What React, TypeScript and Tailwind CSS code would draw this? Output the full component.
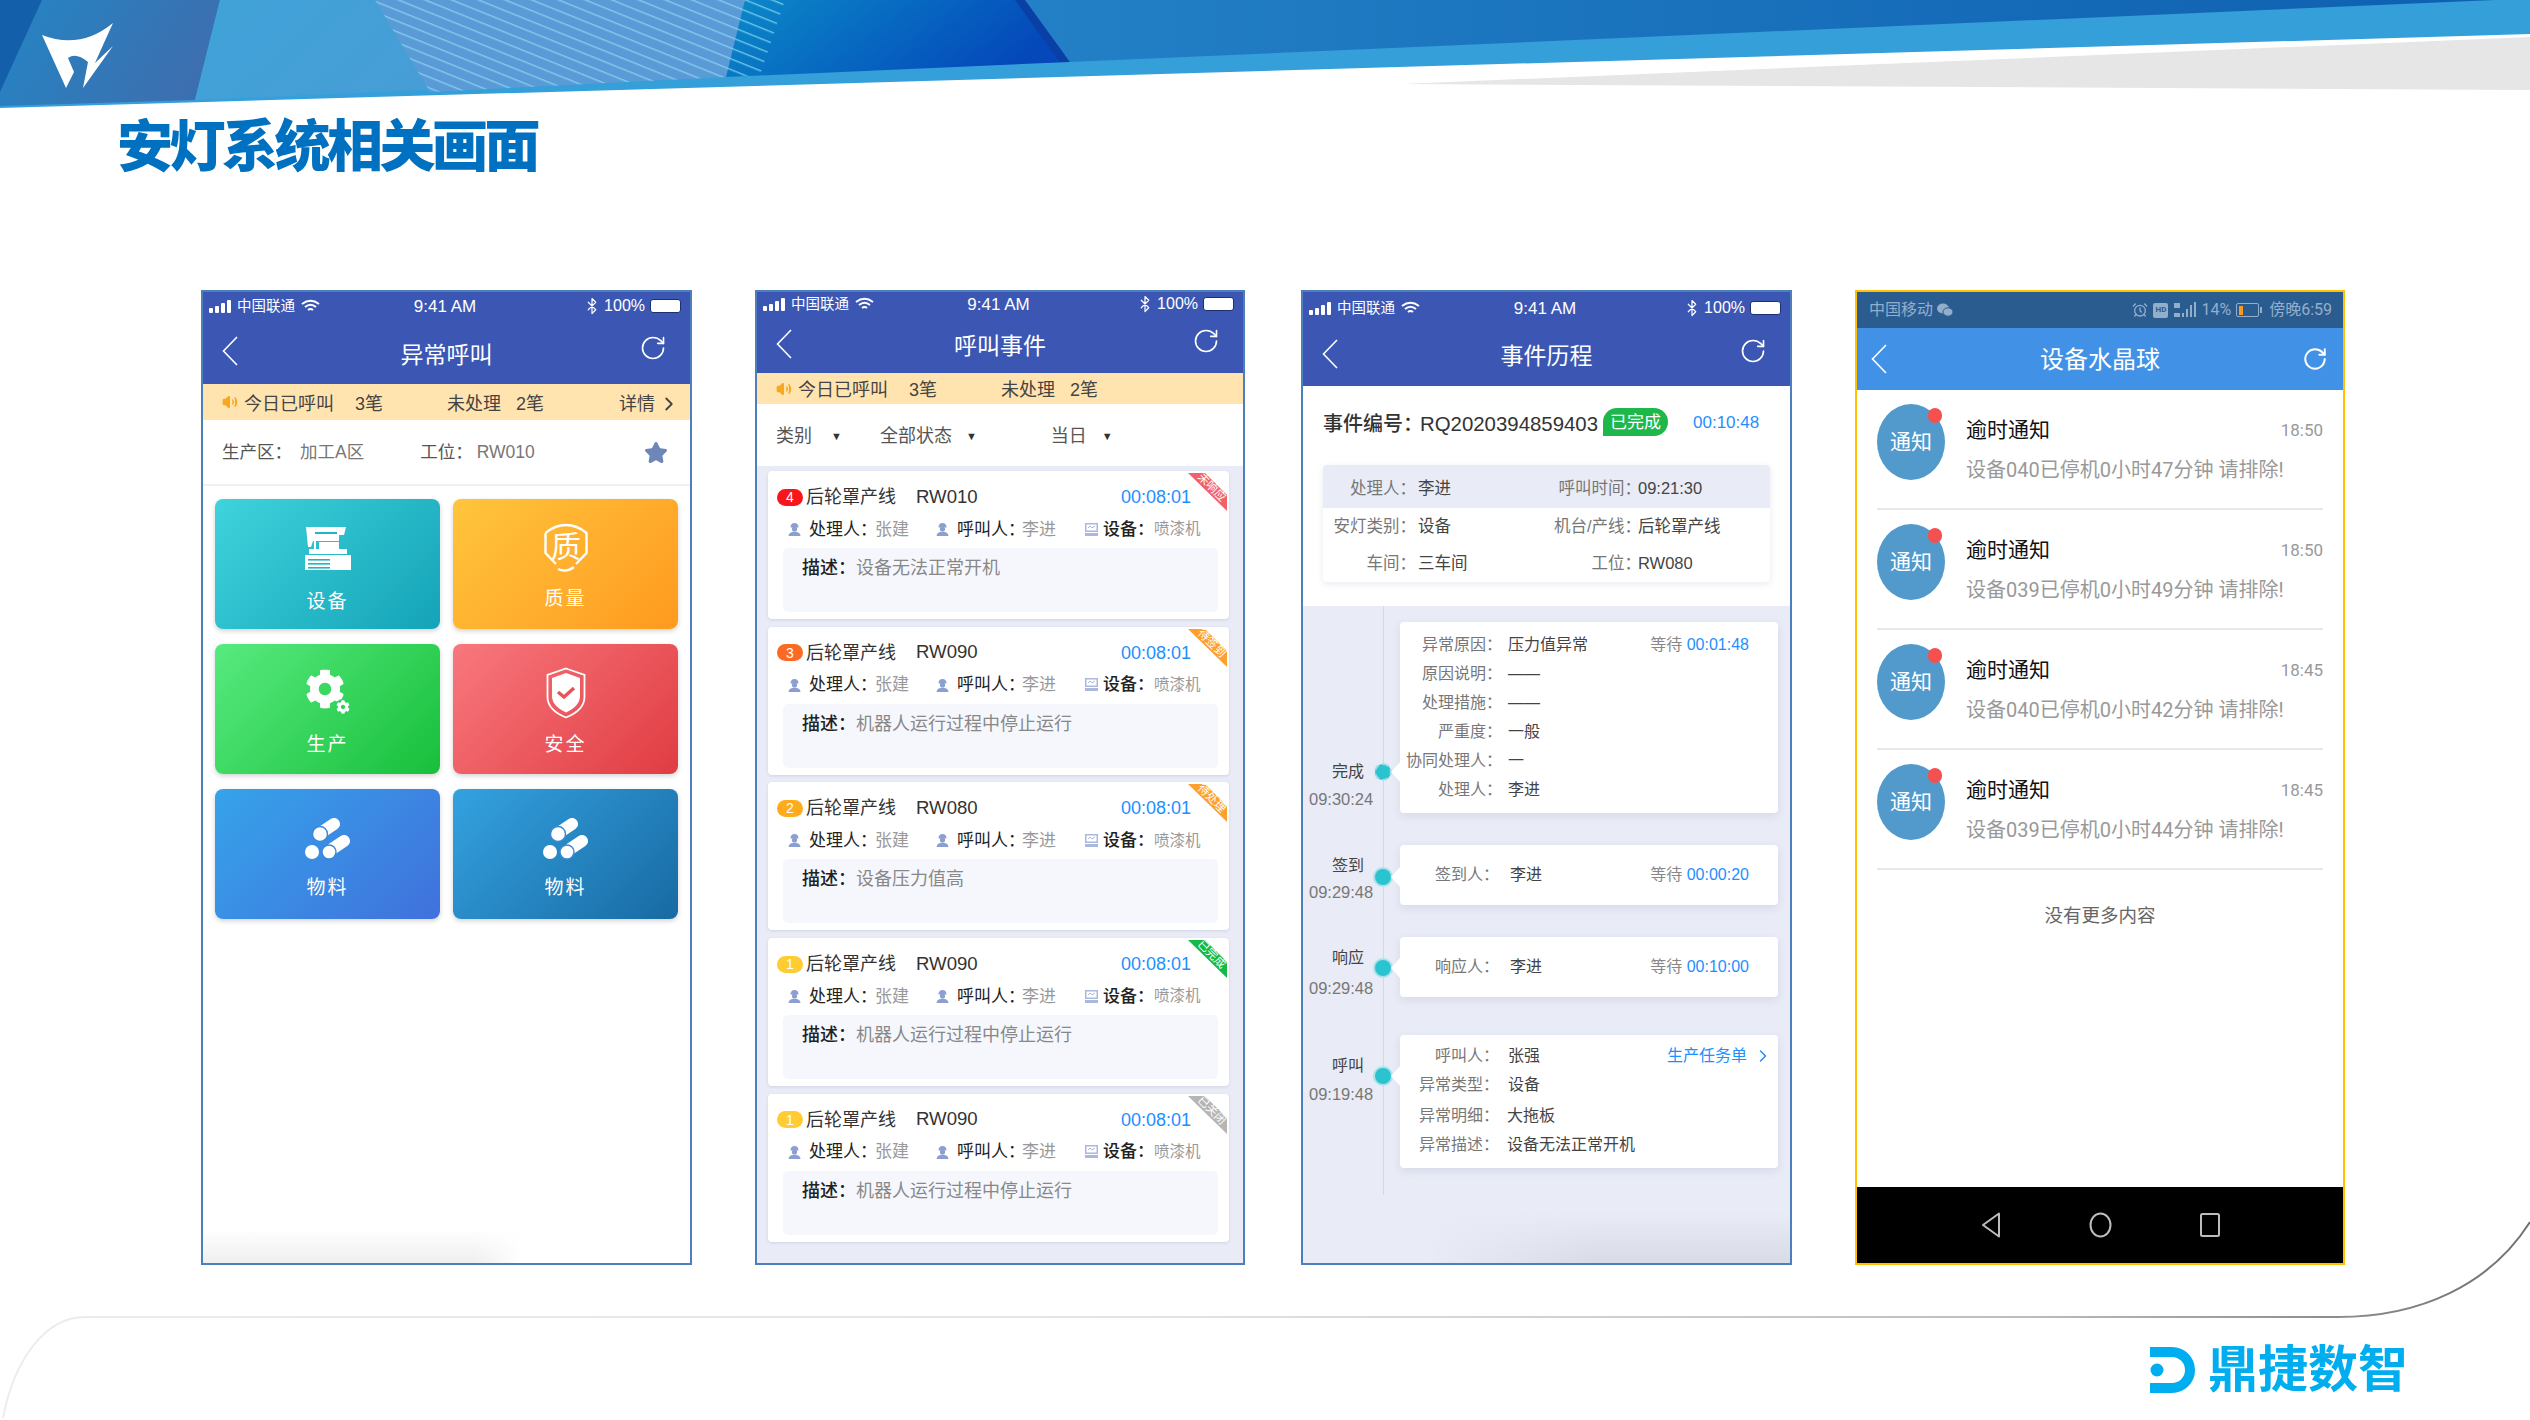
import { AlarmClock, Bluetooth, ChevronRight, RotateCw, Star, Volume2 } from "lucide-react";
import { FaCog } from "react-icons/fa";

const Back = ({ c = "" }: { c?: string }) => (
  <svg className={c} width="16" height="30" viewBox="0 0 16 30" fill="none" stroke="white" strokeWidth="1.6">
    <path d="M15 1 L1.5 15 L15 29" />
  </svg>
);

function Banner() {
  return (
    <svg className="absolute left-0 top-0" width="2530" height="110" viewBox="0 0 2530 110">
      <defs>
        <linearGradient id="a" x1="0" x2="1" y1="0" y2="0.3">
          <stop offset="0" stopColor="#2485c4" />
          <stop offset="1" stopColor="#3c6fb0" />
        </linearGradient>
        <linearGradient id="b" x1="0" x2="1" y1="0" y2="0.2">
          <stop offset="0" stopColor="#3fa2d8" />
          <stop offset="1" stopColor="#4d9ad4" />
        </linearGradient>
        <linearGradient id="c" x1="0" x2="1" y1="0" y2="0.3">
          <stop offset="0" stopColor="#0b8ac8" />
          <stop offset="1" stopColor="#0448ba" />
        </linearGradient>
        <linearGradient id="d" x1="0" x2="1" y1="0" y2="0">
          <stop offset="0" stopColor="#2380c6" />
          <stop offset="1" stopColor="#0e60b0" />
        </linearGradient>
        <pattern id="h" width="10" height="10" patternUnits="userSpaceOnUse" patternTransform="rotate(22)">
          <rect width="10" height="1.4" fill="#8fdcf2" fillOpacity="0.75" />
        </pattern>
      </defs>
      <polygon points="0,0 2530,0 2530,34 0,108" fill="#349fd9" />
      <polygon points="0,0 45,0 0,95" fill="#145fa9" />
      <polygon points="42,0 220,0 195,100 0,106 0,92" fill="url(#a)" />
      <polygon points="220,0 748,0 726,77 195,100" fill="url(#b)" />
      <polygon points="375,0 745,0 726,77 430,92" fill="#5a9ad6" />
      <polygon points="745,0 1025,0 1070,62 726,77" fill="url(#c)" />
      <polygon points="1015,0 1028,0 1070,62 1060,62" fill="#0a3fa6" />
      <polygon points="1025,0 2495,0 1070,62" fill="url(#d)" />
      <polygon points="375,0 785,0 760,75 726,77 430,92" fill="url(#h)" />
      <polygon points="1402,84 2530,37 2530,90" fill="#e6e6e6" />
      <path
        d="M42 35 Q80 50 113 23 Q103 45 95 63 L113 46 L83 88 L88 62 Q76 52 68 58 L74 72 L66 88 Z"
        fill="white"
      />
    </svg>
  );
}

function FooterCurve() {
  return (
    <svg className="absolute left-0 top-[1200px]" width="2530" height="220" viewBox="0 0 2530 220" fill="none">
      <defs>
        <linearGradient id="f" gradientUnits="userSpaceOnUse" x1="0" x2="2530" y1="0" y2="0">
          <stop offset="0" stopColor="#ececec" />
          <stop offset="0.45" stopColor="#e4e4e4" />
          <stop offset="0.8" stopColor="#bdbdbd" />
          <stop offset="1" stopColor="#6f6f6f" />
        </linearGradient>
      </defs>
      <path d="M3 218 C14 160 45 117 85 117 L2338 117 C2420 117 2490 85 2530 22" stroke="url(#f)" strokeWidth="2" />
    </svg>
  );
}

function IosStatus({ h }: { h: string }) {
  return (
    <div className={`flex items-center justify-between pl-[6px] pr-[9px] pt-[2px] text-white ${h}`}>
      <div className="flex w-[170px] items-center">
        <svg width="23" height="13" viewBox="0 0 23 13" fill="white">
          <rect x="0" y="8" width="4" height="5" rx="1" />
          <rect x="6" y="6" width="4" height="7" rx="1" />
          <rect x="12" y="3" width="4" height="10" rx="1" />
          <rect x="18" y="0" width="4" height="13" rx="1" />
        </svg>
        <span className="ml-[5px] text-[14.5px] leading-none">中国联通</span>
        <svg className="ml-[6px]" width="19" height="14" viewBox="0 0 19 14" fill="none" stroke="white" strokeWidth="2">
          <path d="M1 5 Q9.5 -1.5 18 5" />
          <path d="M4 8 Q9.5 3.5 15 8" />
          <path d="M7 11 Q9.5 9 12 11" />
        </svg>
      </div>
      <span className="text-[17px] font-medium leading-none">9:41 AM</span>
      <div className="flex w-[170px] items-center justify-end">
        <Bluetooth size={18} strokeWidth={1.6} />
        <span className="ml-[3px] text-[16px] leading-none">100%</span>
        <div className="ml-[5px] flex h-[14px] w-[31px] items-center rounded-[3px] border border-[#1c2f70] bg-white" />
      </div>
    </div>
  );
}

function Nav({ title, h, pt }: { title: string; h: string; pt: string }) {
  return (
    <div className={`flex items-center justify-between text-white ${h}`}>
      <div className="flex w-[80px] pl-[19px]">
        <Back />
      </div>
      <div className={`flex-1 text-center text-[23px] leading-none ${pt}`}>{title}</div>
      <div className="flex w-[80px] justify-end pr-[23px]">
        <RotateCw size={28} strokeWidth={1.4} className="-mt-[6px]" />
      </div>
    </div>
  );
}

function YellowBar({ h, detail }: { h: string; detail?: boolean }) {
  return (
    <div className={`flex items-center bg-[#ffe4b0] pl-[19px] pr-[10px] text-[18px] leading-none text-[#444] ${h}`}>
      <Volume2 size={16} className="fill-[#f7a823] text-[#f7a823]" />
      <span className="ml-[6px] pt-[3px]">今日已呼叫</span>
      <span className="ml-[21px] pt-[3px]">3笔</span>
      <span className="ml-[64px] pt-[3px]">未处理</span>
      <span className="ml-[15px] pt-[3px]">2笔</span>
      {detail && (
        <span className="ml-auto flex items-center pt-[3px]">
          详情
          <ChevronRight size={22} strokeWidth={2} className="ml-[3px]" />
        </span>
      )}
    </div>
  );
}

const Machine = () => (
  <svg width="46" height="43" viewBox="0 0 46 43" fill="white">
    <path d="M1 0 H41 L39 8 H34 V14 H8 L6 20 H3 Z" />
    <rect x="10" y="5" width="22" height="2" fill="#22b5c8" />
    <rect x="9" y="12" width="2" height="10" />
    <rect x="14" y="15" width="20" height="7" />
    <rect x="4" y="22" width="38" height="5" />
    <rect x="0" y="28" width="46" height="15" />
    <rect x="3" y="32" width="22" height="1.6" fill="#22b5c8" />
    <rect x="3" y="36" width="22" height="1.6" fill="#22b5c8" />
    <rect x="3" y="40" width="22" height="1.6" fill="#22b5c8" />
  </svg>
);

const Quality = () => (
  <svg width="44" height="50" viewBox="0 0 44 50" fill="none" stroke="white" strokeWidth="2.4">
    <path d="M1.5 10 Q11 2 22 2 Q33 2 42.5 10 V30 L32 41 M12 41 L1.5 30 V10 M14 46 Q22 50 30 44" />
    <text x="22" y="34" textAnchor="middle" fontSize="30" fill="white" stroke="none">
      质
    </text>
  </svg>
);

const Gear = () => (
  <div className="relative h-[48px] w-[46px]">
    <FaCog size={40} color="white" />
    <div className="absolute bottom-[2px] right-0 flex h-[16px] w-[16px] items-center justify-center rounded-full bg-[#2fd25c]">
      <FaCog size={14} color="white" />
    </div>
  </div>
);

const Safety = () => (
  <svg width="40" height="52" viewBox="0 0 40 52" fill="none">
    <path d="M20 1.5 L38.5 8 V30 Q38.5 43 20 50.5 Q1.5 43 1.5 30 V8 Z" stroke="white" strokeWidth="1.8" />
    <path d="M20 6 L34 11 V29 Q34 39 20 45.5 Q6 39 6 29 V11 Z" fill="white" />
    <path d="M12 25 L18 30 L28 21" stroke="#e9535a" strokeWidth="3.4" />
  </svg>
);

const Material = () => (
  <svg width="46" height="44" viewBox="0 0 46 44" fill="white">
    <g stroke="white" strokeWidth="12" strokeLinecap="round">
      <path d="M17 16 L29 8" />
      <path d="M27 33 L39 25" />
    </g>
    <circle cx="7" cy="36" r="7" />
    <circle cx="15" cy="18" r="7.5" stroke="#3a88d8" strokeWidth="1.4" />
    <circle cx="24" cy="36" r="7" stroke="#3a88d8" strokeWidth="1.4" />
  </svg>
);

const tiles = [
  { l: "设备", g: "bg-[linear-gradient(135deg,#3fd3dc,#14a3b8)]", i: <Machine />, m: "mt-[18px]" },
  { l: "质量", g: "bg-[linear-gradient(135deg,#ffc53d,#ff9a1f)]", i: <Quality />, m: "mt-[15px]" },
  { l: "生产", g: "bg-[linear-gradient(135deg,#58ea7f,#17bf3b)]", i: <Gear />, m: "mt-[16px]" },
  { l: "安全", g: "bg-[linear-gradient(135deg,#f8787d,#e03c42)]", i: <Safety />, m: "mt-[16px]" },
  { l: "物料", g: "bg-[linear-gradient(135deg,#36a3ea,#4071dc)]", i: <Material />, m: "mt-[14px]" },
  { l: "物料", g: "bg-[linear-gradient(135deg,#34a2e0,#186aa3)]", i: <Material />, m: "mt-[14px]" },
];

function PhoneOne() {
  return (
    <div className="relative flex h-[975px] w-[491px] shrink-0 flex-col overflow-hidden border-2 border-[#4d7fbc] bg-white">
      <div className="bg-[#3b57b3]">
        <IosStatus h="h-[26px]" />
        <Nav title="异常呼叫" h="h-[66px]" pt="pt-[8px]" />
      </div>
      <YellowBar h="h-[36px]" detail />
      <div className="flex h-[66px] items-center border-b-2 border-[#f0f0f0] pl-[19px] pr-[22px] pt-[2px] text-[17.5px] leading-none text-[#555]">
        <span>生产区：</span>
        <span className="ml-[8px] text-[#777]">加工A区</span>
        <span className="ml-[56px]">工位：</span>
        <span className="ml-[4px] text-[#777]">RW010</span>
        <Star size={24} className="ml-auto fill-[#6f86ba] text-[#6f86ba]" />
      </div>
      <div className="grid grid-cols-[225px_225px] gap-x-[13px] gap-y-[15px] pl-[12px] pt-[13px]">
        {tiles.map((t, i) => (
          <div
            key={i}
            className={`flex h-[130px] flex-col items-center rounded-[8px] pt-[24px] text-white shadow-[0_2px_5px_rgba(0,0,0,0.18)] ${t.g}`}
          >
            <div className="flex h-[50px] items-center">{t.i}</div>
            <div className={`text-[19px] leading-[22px] tracking-[2px] ${t.m}`}>{t.l}</div>
          </div>
        ))}
      </div>
      <div className="absolute bottom-0 left-0 h-[34px] w-[320px] bg-[linear-gradient(to_top,#efefef,transparent)] [mask-image:linear-gradient(to_right,black_85%,transparent)]" />
    </div>
  );
}

const Worker = () => (
  <svg width="13" height="14" viewBox="0 0 13 14" fill="#8b9fd0">
    <path d="M2.5 5.5 Q2.5 1 6.5 1 Q10.5 1 10.5 5.5 Z" />
    <circle cx="6.5" cy="7" r="2.6" />
    <path d="M0.5 14 Q1 9.8 6.5 9.8 Q12 9.8 12.5 14 Z" />
  </svg>
);

const Device = () => (
  <svg width="13" height="13" viewBox="0 0 13 13" fill="#a9b8dc">
    <path d="M0 0 H13 V9 H0 Z M1.5 1.5 V7.5 H11.5 V1.5 Z" fillRule="evenodd" />
    <rect y="10" width="13" height="3" />
    <path d="M3 5 L5 3 L7 5 L10 3" stroke="#a9b8dc" fill="none" />
  </svg>
);

const events = [
  { n: "4", b: "bg-[#f7161b]", rw: "RW010", r: "#f0616c", t: "未响应", d: "设备无法正常开机" },
  { n: "3", b: "bg-[#fb6a23]", rw: "RW090", r: "#ff9f2d", t: "待签到", d: "机器人运行过程中停止运行" },
  { n: "2", b: "bg-[#ffab1c]", rw: "RW080", r: "#ff9f2d", t: "待处理", d: "设备压力值高" },
  { n: "1", b: "bg-[#ffcc33]", rw: "RW090", r: "#12ba46", t: "已完成", d: "机器人运行过程中停止运行" },
  { n: "1", b: "bg-[#ffcc33]", rw: "RW090", r: "#b5b5b5", t: "已关闭", d: "机器人运行过程中停止运行" },
];

function Ribbon({ color, text }: { color: string; text: string }) {
  return (
    <div className="absolute right-[2px] top-[2px] h-[38px] w-[39px]">
      <svg width="39" height="38" viewBox="0 0 39 38" className="absolute left-0 top-0">
        <polygon points="0,0 17,0 39,22 39,38" fill={color} />
      </svg>
      <span className="absolute left-[6px] top-[7px] w-[36px] rotate-45 text-center text-[11.5px] leading-[14px] text-white">
        {text}
      </span>
    </div>
  );
}

function EventCard({ e }: { e: (typeof events)[number] }) {
  return (
    <div className="relative h-[148px] rounded-[4px] bg-white pt-[16px] shadow-[0_1px_3px_rgba(60,70,120,0.15)]">
      <Ribbon color={e.r} text={e.t} />
      <div className="flex h-[20px] items-center pl-[9px] pr-[38px] text-[18px] leading-none text-[#333]">
        <span className={`flex h-[17px] w-[26px] items-center justify-center rounded-full text-[14px] text-white ${e.b}`}>
          {e.n}
        </span>
        <span className="ml-[3px]">后轮罩产线</span>
        <span className="ml-[20px] text-[18.6px]">{e.rw}</span>
        <span className="ml-auto text-[#1e8fff]">00:08:01</span>
      </div>
      <div className="mt-[12px] flex h-[20px] items-center pl-[20px] text-[17px] leading-none">
        <div className="flex w-[148px] items-center">
          <Worker />
          <span className="ml-[8px] text-[#222]">处理人：</span>
          <span className="-ml-[2px] text-[#999]">张建</span>
        </div>
        <div className="flex w-[149px] items-center">
          <Worker />
          <span className="ml-[8px] text-[#222]">呼叫人：</span>
          <span className="-ml-[3px] text-[#999]">李进</span>
        </div>
        <div className="flex items-center">
          <Device />
          <span className="ml-[5px] font-medium text-[#222]">设备：</span>
          <span className="text-[15.5px] text-[#999]">喷漆机</span>
        </div>
      </div>
      <div className="ml-[15px] mr-[11px] mt-[9px] h-[64px] rounded-[5px] bg-[#f5f7fd] pl-[19px] pt-[9px] text-[18px] leading-[22px]">
        <span className="font-medium text-[#222]">描述：</span>
        <span className="text-[#888]">{e.d}</span>
      </div>
    </div>
  );
}

function PhoneTwo() {
  return (
    <div className="ml-[63px] flex h-[975px] w-[490px] shrink-0 flex-col overflow-hidden border-2 border-[#4d7fbc] bg-[#e9ecf6]">
      <div className="bg-[#3b57b3]">
        <IosStatus h="h-[22px]" />
        <Nav title="呼叫事件" h="h-[59px]" pt="pt-[5px]" />
      </div>
      <YellowBar h="h-[31px]" />
      <div className="flex h-[62px] items-center bg-white pl-[19px] pt-[2px] text-[18px] leading-none text-[#555]">
        <span>类别</span>
        <span className="ml-[19px] text-[11px] text-[#333]">▼</span>
        <span className="ml-[38px]">全部状态</span>
        <span className="ml-[14px] text-[11px] text-[#333]">▼</span>
        <span className="ml-[74px]">当日</span>
        <span className="ml-[15px] text-[11px] text-[#333]">▼</span>
      </div>
      <div className="flex flex-col gap-[7.7px] pl-[11px] pr-[14px] pt-[5px]">
        {events.map((e, i) => (
          <EventCard key={i} e={e} />
        ))}
      </div>
    </div>
  );
}

function InfoRow({ a, b, c, d, bg }: { a: string; b: string; c: string; d: string; bg?: boolean }) {
  return (
    <div className={`flex items-center text-[16.5px] leading-none ${bg ? "h-[43px] bg-[#e9ecf6] pt-[4px]" : "h-[37px]"}`}>
      <span className="w-[93px] text-right text-[#777]">{a}</span>
      <span className="w-[125px] pl-[2px] text-[#444]">{b}</span>
      <span className="w-[100px] whitespace-nowrap text-right text-[#777]">{c}</span>
      <span className="-ml-[3px] text-[#444]">{d}</span>
    </div>
  );
}

const Notch = ({ c }: { c: string }) => (
  <div className={`absolute -left-[9px] h-0 w-0 border-y-[11px] border-r-[10px] border-y-transparent border-r-white ${c}`} />
);

function Wait({ t }: { t: string }) {
  return (
    <span className="ml-auto pr-[29px] leading-none text-[#888]">
      等待 <span className="text-[#1e8fff]">{t}</span>
    </span>
  );
}

function Kv({ k, v, w, pl = "pl-[6px]", extra }: { k: string; v: string; w: string; pl?: string; extra?: React.ReactNode }) {
  return (
    <div className="flex h-[29px] w-full items-center text-[16px] leading-none">
      <span className={`whitespace-nowrap text-right text-[#777] ${w}`}>{k}</span>
      <span className={`text-[#444] ${pl}`}>{v}</span>
      {extra}
    </div>
  );
}

function Col({ l, t, pt, mt, dot, dashed }: { l: string; t: string; pt: string; mt: string; dot: string; dashed?: boolean }) {
  return (
    <div className={`relative w-[97px] shrink-0 ${pt}`}>
      <div className="ml-[29px] h-[22px] text-[16px] leading-[22px] text-[#444]">{l}</div>
      <div className={`ml-[6px] h-[22px] text-[16.5px] leading-[22px] text-[#777] ${mt}`}>{t}</div>
      <div
        className={`absolute left-[72px] h-[16px] w-[16px] rounded-full bg-[#2cc3d1] ${dot} ${
          dashed ? "outline-2 outline-dashed outline-[#9fdfe6] -outline-offset-1" : "ring-2 ring-[#a8e3ea]"
        }`}
      />
    </div>
  );
}

function PhoneThree() {
  const card = "relative w-[378px] rounded-[4px] bg-white shadow-[0_3px_8px_rgba(70,80,140,0.12)]";
  return (
    <div className="relative ml-[56px] flex h-[975px] w-[491px] shrink-0 flex-col overflow-hidden border-2 border-[#4d7fbc] bg-white">
      <div className="bg-[#3b57b3]">
        <IosStatus h="h-[30px]" />
        <Nav title="事件历程" h="h-[64px]" pt="pt-[4px]" />
      </div>
      <div className="h-[220px] px-[20px] pt-[22px]">
        <div className="flex h-[28px] items-center leading-none text-[#333]">
          <span className="pt-[4px] text-[20px] font-medium">事件编号：</span>
          <span className="-ml-[3px] pt-[4px] text-[20.4px]">RQ2020394859403</span>
          <span className="ml-[5px] flex h-[28px] w-[65px] items-center justify-center rounded-[14px] rounded-bl-none bg-[#1eb84a] text-[17px] text-white">
            已完成
          </span>
          <span className="ml-[25px] text-[17px] text-[#1e8fff]">00:10:48</span>
        </div>
        <div className="mt-[29px] w-[447px] overflow-hidden rounded-[4px] bg-white shadow-[0_2px_6px_rgba(70,80,140,0.12)]">
          <InfoRow a="处理人：" b="李进" c="呼叫时间：" d="09:21:30" bg />
          <InfoRow a="安灯类别：" b="设备" c="机台/产线：" d="后轮罩产线" />
          <InfoRow a="车间：" b="三车间" c="工位：" d="RW080" />
        </div>
      </div>
      <div className="relative flex-1 bg-[#e9ecf6] pt-[16px]">
        <div className="absolute left-[80px] top-0 h-[589px] w-px bg-[#d3d7e6]" />
        <div className="flex">
          <Col l="完成" t="09:30:24" pt="pt-[139px]" mt="mt-[5px]" dot="top-[142px]" dashed />
          <div className={`${card} h-[191px] pt-[8px]`}>
            <Notch c="top-[139px]" />
            <Kv k="异常原因：" v="压力值异常" w="w-[102px]" extra={<Wait t="00:01:48" />} />
            <Kv k="原因说明：" v="——" w="w-[102px]" />
            <Kv k="处理措施：" v="——" w="w-[102px]" />
            <Kv k="严重度：" v="一般" w="w-[102px]" />
            <Kv k="协同处理人：" v="一" w="w-[102px]" />
            <Kv k="处理人：" v="李进" w="w-[102px]" />
          </div>
        </div>
        <div className="mt-[32px] flex">
          <Col l="签到" t="09:29:48" pt="pt-[10px]" mt="mt-[4px]" dot="top-[24px]" />
          <div className={`${card} flex h-[60px] items-center`}>
            <Notch c="top-[21px]" />
            <Kv k="签到人：" v="李进" w="w-[99px]" pl="pl-[11px]" extra={<Wait t="00:00:20" />} />
          </div>
        </div>
        <div className="mt-[32px] flex">
          <Col l="响应" t="09:29:48" pt="pt-[10px]" mt="mt-[8px]" dot="top-[23px]" />
          <div className={`${card} flex h-[60px] items-center`}>
            <Notch c="top-[20px]" />
            <Kv k="响应人：" v="李进" w="w-[99px]" pl="pl-[11px]" extra={<Wait t="00:10:00" />} />
          </div>
        </div>
        <div className="mt-[36px] flex">
          <Col l="呼叫" t="09:19:48" pt="pt-[20px]" mt="mt-[6px]" dot="top-[33px]" />
          <div className={`${card} h-[133px] pt-[6px]`}>
            <Notch c="top-[30px]" />
            <Kv
              k="呼叫人："
              v="张强"
              w="w-[99px]"
              pl="pl-[9px]"
              extra={
                <span className="ml-auto flex items-center pr-[5px] text-[#1e8fff]">
                  生产任务单
                  <ChevronRight size={20} strokeWidth={1.8} className="ml-[6px]" />
                </span>
              }
            />
            <Kv k="异常类型：" v="设备" w="w-[99px]" pl="pl-[9px]" />
            <div className="mt-[2px]">
              <Kv k="异常明细：" v="大拖板" w="w-[99px]" pl="pl-[8px]" />
            </div>
            <Kv k="异常描述：" v="设备无法正常开机" w="w-[99px]" pl="pl-[8px]" />
          </div>
        </div>
      </div>
      <div className="absolute bottom-0 right-0 h-[50px] w-[360px] bg-[linear-gradient(to_top,#d8dbe6,transparent)] [mask-image:linear-gradient(to_left,black_55%,transparent)]" />
    </div>
  );
}

const notices = [
  { t: "18:50", d: "设备040已停机0小时47分钟 请排除!" },
  { t: "18:50", d: "设备039已停机0小时49分钟 请排除!" },
  { t: "18:45", d: "设备040已停机0小时42分钟 请排除!" },
  { t: "18:45", d: "设备039已停机0小时44分钟 请排除!" },
];

function PhoneFour() {
  return (
    <div className="ml-[63px] flex h-[975px] w-[490px] shrink-0 flex-col overflow-hidden border-2 border-[#ffc000] bg-white font-['Roboto','Noto_Sans_CJK_SC',sans-serif]">
      <div className="flex h-[36px] items-center bg-[#2b5c90] pl-[12px] pr-[11px] text-[16px] leading-none text-[#93aecb]">
        <span>中国移动</span>
        <svg className="ml-[4px]" width="16" height="14" viewBox="0 0 16 14" fill="#93aecb">
          <ellipse cx="6" cy="5.5" rx="6" ry="5" />
          <ellipse cx="11" cy="9" rx="5" ry="4.2" stroke="#2b5c90" />
        </svg>
        <AlarmClock size={16} className="ml-auto" strokeWidth={2} />
        <span className="ml-[5px] flex h-[15px] w-[15px] items-center justify-center rounded-[2px] bg-[#93aecb] text-[8px] font-bold text-[#2b5c90]">
          HD
        </span>
        <svg className="ml-[6px]" width="24" height="16" viewBox="0 0 24 16" fill="#93aecb">
          <rect x="0" y="1" width="6" height="5" />
          <rect x="0" y="11" width="6" height="4" />
          <rect x="8" y="11" width="2" height="4" />
          <rect x="12" y="7" width="2" height="8" />
          <rect x="16" y="3" width="2" height="12" />
          <rect x="20" y="0" width="2" height="15" />
        </svg>
        <span className="ml-[3px]">14%</span>
        <span className="ml-[5px] flex h-[14px] w-[23px] items-center rounded-[2px] border border-[#93aecb] pl-[2px]">
          <span className="h-[9px] w-[4px] bg-[#f59a23]" />
        </span>
        <span className="ml-[1px] h-[6px] w-[2px] bg-[#93aecb]" />
        <span className="ml-[7px]">傍晚6:59</span>
      </div>
      <div className="flex h-[62px] items-center justify-between bg-[#4192e6] text-white">
        <div className="flex w-[80px] pl-[14px]">
          <Back />
        </div>
        <div className="flex-1 pt-[2px] text-center text-[24px] leading-none">设备水晶球</div>
        <div className="flex w-[80px] justify-end pr-[15px]">
          <RotateCw size={26} strokeWidth={1.8} />
        </div>
      </div>
      <div className="flex flex-col px-[20px] pt-[14px]">
        {notices.map((n, i) => (
          <div key={i} className="relative mb-[14px] flex h-[106px] border-b-2 border-[#e8e8e8]">
            <div className="relative flex h-[76px] w-[68px] shrink-0 items-center justify-center rounded-[50%] bg-[#5299cc] text-[21px] leading-none text-white">
              通知
              <span className="absolute right-[3px] top-[4px] h-[15px] w-[14px] rounded-full bg-[#f55050]" />
            </div>
            <div className="ml-[21px] flex flex-1 flex-col">
              <div className="mt-[14px] flex h-[24px] items-center justify-between leading-none">
                <span className="text-[21px] text-[#111]">逾时通知</span>
                <span className="text-[17px] text-[#999]">{n.t}</span>
              </div>
              <div className="mt-[18px] whitespace-nowrap text-[20px] leading-[20px] text-[#999]">{n.d}</div>
            </div>
          </div>
        ))}
      </div>
      <div className="mt-[20px] text-center text-[18.5px] leading-[24px] text-[#666]">没有更多内容</div>
      <div className="mt-auto flex h-[76px] items-center justify-center gap-[88px] bg-black">
        <svg width="20" height="26" viewBox="0 0 20 26" fill="none" stroke="#bdbdbd" strokeWidth="2">
          <path d="M18 1.5 V24.5 L2 13 Z" strokeLinejoin="round" />
        </svg>
        <svg width="23" height="26" viewBox="0 0 23 26" fill="none" stroke="#bdbdbd" strokeWidth="2">
          <ellipse cx="11.5" cy="13" rx="10" ry="11.5" />
        </svg>
        <svg width="20" height="24" viewBox="0 0 20 24" fill="none" stroke="#bdbdbd" strokeWidth="2">
          <rect x="1" y="1" width="18" height="22" rx="1.5" />
        </svg>
      </div>
    </div>
  );
}

export default function App() {
  return (
    <div className="relative h-[1420px] w-[2530px] overflow-hidden bg-white font-['Liberation_Sans','Noto_Sans_CJK_SC',sans-serif]">
      <Banner />
      <FooterCurve />
      <div className="relative">
        <div className="h-[290px] pl-[117px] pt-[115px]">
          <h1 className="whitespace-nowrap text-[56px] font-black leading-[64px] tracking-[-3.5px] text-[#0070c0]">
            安灯系统相关画面
          </h1>
        </div>
        <div className="flex pl-[201px]">
          <PhoneOne />
          <PhoneTwo />
          <PhoneThree />
          <PhoneFour />
        </div>
        <div className="mt-[80px] flex items-center justify-end pr-[122px]">
          <svg width="48" height="46" viewBox="0 0 48 46" fill="none">
            <path d="M2 5 H24 A18 18 0 0 1 24 41 H2" stroke="#00aeef" strokeWidth="10" />
            <circle cx="9" cy="23" r="6.5" fill="#00aeef" />
          </svg>
          <span className="ml-[12px] whitespace-nowrap text-[50px] font-bold leading-[50px] text-[#00aeef]">鼎捷数智</span>
        </div>
      </div>
    </div>
  );
}
